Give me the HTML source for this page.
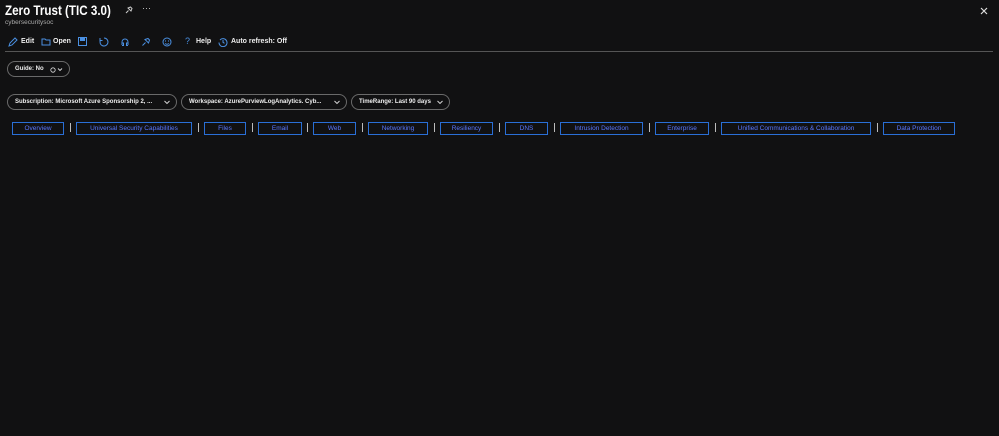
<!DOCTYPE html><html><head><style>
body{margin:0;width:999px;height:436px;background:#111112;font-family:"Liberation Sans",sans-serif;color:#fff;position:relative;overflow:hidden}
.a{position:absolute;white-space:nowrap}
.pill{position:absolute;height:14px;border:1px solid #6a6a6a;border-radius:8px;font-size:6px;font-weight:bold;line-height:15px;padding-left:7px;color:#eee;white-space:nowrap;overflow:hidden}
.pill svg{position:absolute;right:6px;top:5px}
.tab{position:absolute;top:122px;height:11px;border:1px solid #2a6fd6;font-size:6.5px;line-height:11px;text-align:center;color:#5a78ff;white-space:nowrap}
.sep{position:absolute;top:123px;width:1px;height:9px;background:#bbb}
.tb{position:absolute;top:38px;font-size:7px;font-weight:bold;color:#eee;white-space:nowrap}
</style></head><body>
<div class="a" style="left:5px;top:2px;font-size:14px;font-weight:bold;transform:scaleX(0.83);transform-origin:0 0">Zero Trust (TIC 3.0)</div>
<svg class="a" style="left:125px;top:6px" width="8" height="8"><path d="M1 7l2.5-2.5M3 2l3 3 1-2.5-1.5-1.5z" fill="none" stroke="#ccc"/></svg>
<div class="a" style="left:142px;top:3px;font-size:9px;color:#ccc">···</div>
<div class="a" style="left:5px;top:19px;font-size:6.5px;color:#aaa">cybersecuritysoc</div>
<svg class="a" style="left:980px;top:7px" width="8" height="8"><path d="M1 1l6 6M7 1l-6 6" stroke="#ddd" stroke-width="1.2"/></svg>
<svg class="a" style="left:8px;top:37px" width="10" height="10"><path d="M1 9l1-3 5-5 2 2-5 5z" fill="none" stroke="#4a90e2"/></svg>
<div class="tb" style="left:21px">Edit</div>
<svg class="a" style="left:41px;top:37px" width="10" height="10"><path d="M1 2h3l1 1h4v5H1z" fill="none" stroke="#4a90e2"/></svg>
<div class="tb" style="left:53px">Open</div>
<svg class="a" style="left:78px;top:37px" width="9" height="9"><rect x=".5" y=".5" width="8" height="8" fill="none" stroke="#4a90e2"/><rect x="2" y="1" width="5" height="3" fill="#4a90e2"/></svg>
<svg class="a" style="left:99px;top:37px" width="10" height="10"><path d="M5 1a4 4 0 1 1-3.5 2M1 1v2.5h2.5" fill="none" stroke="#4a90e2"/></svg>
<svg class="a" style="left:120px;top:37px" width="10" height="10"><path d="M2 8V5a3 3 0 0 1 6 0v3M2 6h1.5v2.5H2M8 6H6.5v2.5H8" fill="none" stroke="#4a90e2"/></svg>
<svg class="a" style="left:141px;top:37px" width="10" height="10"><path d="M1.5 8.5l3-3M4 2.5l3.5 3.5 1-3-1.5-1.5z" fill="none" stroke="#4a90e2"/></svg>
<svg class="a" style="left:162px;top:37px" width="10" height="10"><circle cx="5" cy="5" r="4" fill="none" stroke="#4a90e2"/><path d="M3 6.5q2 1.5 4 0" fill="none" stroke="#4a90e2"/><circle cx="3.5" cy="4" r=".6" fill="#4a90e2"/><circle cx="6.5" cy="4" r=".6" fill="#4a90e2"/></svg>
<div class="a" style="left:185px;top:36px;font-size:9px;color:#4a90e2">?</div>
<div class="tb" style="left:196px">Help</div>
<svg class="a" style="left:218px;top:37px" width="10" height="10"><path d="M2 3a4 4 0 1 1-1 2.5" fill="none" stroke="#4a90e2"/><path d="M5 3v2.3l1.5 1" stroke="#4a90e2" fill="none"/></svg>
<div class="tb" style="left:231px">Auto refresh: Off</div>
<div class="a" style="left:5px;top:51px;width:988px;height:1px;background:#555"></div>
<div class="pill" style="left:7px;top:61px;width:54px">Guide: No<svg width="14" height="6" style="right:5px;top:5px"><circle cx="3" cy="3" r="2.2" fill="none" stroke="#ddd" stroke-width=".8"/><path d="M8 1.5l2 2 2-2" fill="none" stroke="#ddd" stroke-width=".9"/></svg></div>
<div class="pill" style="left:7px;top:94px;width:161px">Subscription: Microsoft Azure Sponsorship 2, ...<svg width="6" height="5"><path d="M.5 1l2.5 2.5L5.5 1" fill="none" stroke="#ddd" stroke-width=".9"/></svg></div>
<div class="pill" style="left:181px;top:94px;width:157px">Workspace: AzurePurviewLogAnalytics. Cyb...<svg width="6" height="5"><path d="M.5 1l2.5 2.5L5.5 1" fill="none" stroke="#ddd" stroke-width=".9"/></svg></div>
<div class="pill" style="left:351px;top:94px;width:90px">TimeRange: Last 90 days<svg width="6" height="5"><path d="M.5 1l2.5 2.5L5.5 1" fill="none" stroke="#ddd" stroke-width=".9"/></svg></div>
<div class="tab" style="left:12px;width:50px">Overview</div><div class="sep" style="left:70px"></div>
<div class="tab" style="left:76px;width:114px">Universal Security Capabilities</div><div class="sep" style="left:198px"></div>
<div class="tab" style="left:204px;width:40px">Files</div><div class="sep" style="left:252px"></div>
<div class="tab" style="left:258px;width:42px">Email</div><div class="sep" style="left:307px"></div>
<div class="tab" style="left:313px;width:41px">Web</div><div class="sep" style="left:362px"></div>
<div class="tab" style="left:368px;width:58px">Networking</div><div class="sep" style="left:434px"></div>
<div class="tab" style="left:440px;width:51px">Resiliency</div><div class="sep" style="left:499px"></div>
<div class="tab" style="left:505px;width:41px">DNS</div><div class="sep" style="left:554px"></div>
<div class="tab" style="left:560px;width:81px">Intrusion Detection</div><div class="sep" style="left:649px"></div>
<div class="tab" style="left:655px;width:52px">Enterprise</div><div class="sep" style="left:715px"></div>
<div class="tab" style="left:721px;width:148px">Unified Communications &amp; Collaboration</div><div class="sep" style="left:877px"></div>
<div class="tab" style="left:883px;width:70px">Data Protection</div>
</body></html>
